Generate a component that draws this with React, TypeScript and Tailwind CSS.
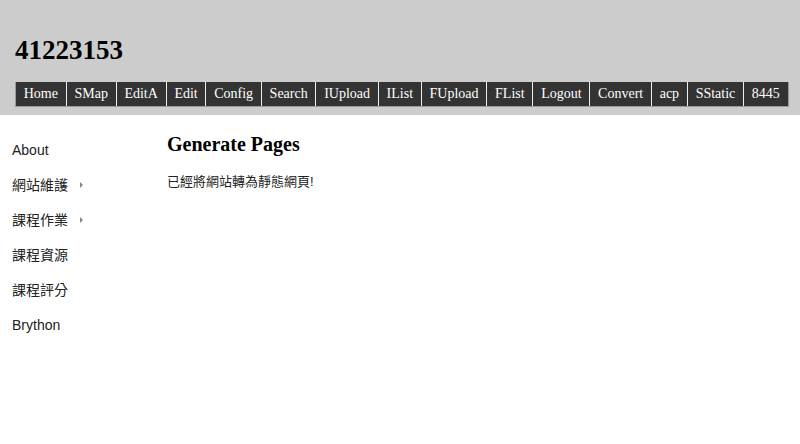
const navItems = [
    'Home', 'SMap', 'EditA', 'Edit', 'Config', 'Search', 'IUpload', 'IList',
    'FUpload', 'FList', 'Logout', 'Convert', 'acp', 'SStatic', '8445',
];

const sideItems = [
    { label: 'About', sub: false },
    { label: '網站維護', sub: true },
    { label: '課程作業', sub: true },
    { label: '課程資源', sub: false },
    { label: '課程評分', sub: false },
    { label: 'Brython', sub: false },
];

function App() {
    return (
        <div className="w-[800px] h-[444px] bg-white overflow-hidden">
            <div className="bg-[#cccccc] h-[115px] px-[15px] pt-[35px]">
                <h1 className="text-[27px] leading-[30px] font-bold text-black font-['Liberation_Serif',serif]">41223153</h1>
                <div className="flex mt-[17px] border-l border-b border-[#999999] w-fit">
                    {navItems.map((item) => (
                        <div
                            key={item}
                            className="bg-[#333333] text-white h-[24px] leading-[24px] px-[7.75px] text-[14px] border-r border-[#eeeeee] last:border-[#999999] font-['Liberation_Serif',serif]"
                        >
                            {item}
                        </div>
                    ))}
                </div>
            </div>
            <div className="flex">
                <div className="w-[167px] pl-[12px] pt-[25px] font-['Liberation_Sans','Noto_Sans_CJK_TC',sans-serif] text-[14px] text-[#222222]">
                    {sideItems.map((s) => (
                        <div key={s.label} className="h-[35px] flex items-start">
                            <span className="leading-[20px]">{s.label}</span>
                            {s.sub && (
                                <span className="ml-[12px] mt-[7px] w-0 h-0 border-y-[3px] border-y-transparent border-l-[3px] border-l-[#888888]" />
                            )}
                        </div>
                    ))}
                </div>
                <div className="pt-[18px]">
                    <h2 className="text-[20px] leading-[22px] font-bold text-black font-['Liberation_Serif',serif]">Generate Pages</h2>
                    <p className="mt-[19px] text-[13px] leading-[16px] text-[#222222] font-['Liberation_Sans','Noto_Sans_CJK_TC',sans-serif]">已經將網站轉為靜態網頁!</p>
                </div>
            </div>
        </div>
    );
}

export default App;
